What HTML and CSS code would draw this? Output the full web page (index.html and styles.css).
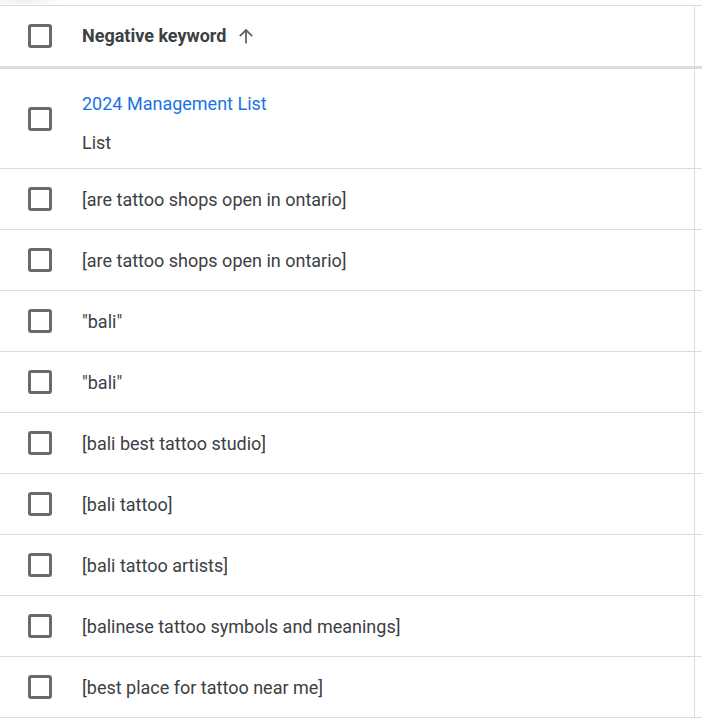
FILE: index.html
```html
<!DOCTYPE html>
<html>
<head>
<meta charset="utf-8">
<link rel="stylesheet" href="styles.css">
</head>
<body>
<div class="top"><div class="shade"></div></div>
<div class="table">
  <div class="row header">
    <div class="cell main">
      <span class="cb"></span>
      <span class="head-label">Negative keyword</span>
      <svg class="sort" width="16" height="16" viewBox="0 0 16 16"><path d="M8 15.5V2M1.8 8.2L8 2l6.2 6.2" fill="none" stroke="#5f6368" stroke-width="1.8"/></svg>
    </div>
    <div class="cell extra"></div>
  </div>
  <div class="row list">
    <div class="cell main">
      <span class="cb"></span>
      <div class="two">
        <span class="link">2024 Management List</span>
        <span class="txt">List</span>
      </div>
    </div>
    <div class="cell extra"></div>
  </div>
  <div class="row"><div class="cell main"><span class="cb"></span><span class="txt">[are tattoo shops open in ontario]</span></div><div class="cell extra"></div></div>
  <div class="row"><div class="cell main"><span class="cb"></span><span class="txt">[are tattoo shops open in ontario]</span></div><div class="cell extra"></div></div>
  <div class="row"><div class="cell main"><span class="cb"></span><span class="txt">"bali"</span></div><div class="cell extra"></div></div>
  <div class="row"><div class="cell main"><span class="cb"></span><span class="txt">"bali"</span></div><div class="cell extra"></div></div>
  <div class="row"><div class="cell main"><span class="cb"></span><span class="txt">[bali best tattoo studio]</span></div><div class="cell extra"></div></div>
  <div class="row"><div class="cell main"><span class="cb"></span><span class="txt">[bali tattoo]</span></div><div class="cell extra"></div></div>
  <div class="row"><div class="cell main"><span class="cb"></span><span class="txt">[bali tattoo artists]</span></div><div class="cell extra"></div></div>
  <div class="row"><div class="cell main"><span class="cb"></span><span class="txt">[balinese tattoo symbols and meanings]</span></div><div class="cell extra"></div></div>
  <div class="row"><div class="cell main"><span class="cb"></span><span class="txt">[best place for tattoo near me]</span></div><div class="cell extra"></div></div>
</div>
</body>
</html>
```
FILE: styles.css
```css
html, body {
  margin: 0;
  padding: 0;
  background: #fff;
  font-family: Roboto, "Liberation Sans", sans-serif;
  color: #3c4043;
  overflow: hidden;
}
.top {
  height: 5px;
  position: relative;
}
.shade {
  width: 60px;
  height: 5px;
  background: radial-gradient(ellipse at 40% 0%, #ececec 0%, #f6f6f6 45%, rgba(255,255,255,0) 75%);
}
.table {
  border-top: 1px solid #dadce0;
}
.row {
  display: flex;
  border-bottom: 1px solid #dadce0;
}
.row.header {
  border-bottom: 3px solid #dadce0;
}
.cell.main {
  width: 695px;
  flex: none;
  border-right: 1px solid #dadce0;
  display: flex;
  align-items: center;
  padding-left: 28px;
  box-sizing: border-box;
  height: 60px;
}
.row.list .cell.main {
  height: auto;
}
.cell.extra {
  flex: 1;
}
.cb {
  width: 24px;
  height: 24px;
  box-sizing: border-box;
  border: 3px solid #6a6a6a;
  border-radius: 3px;
  flex: none;
  margin-right: 30px;
}
.txt {
  font-size: 18px;
  line-height: 24px;
  padding-top: 1px;
  color: #3c4043;
}
.head-label {
  font-size: 18px;
  font-weight: 700;
  line-height: 24px;
  color: #3c4043;
}
.sort {
  margin-left: 12px;
}
.two {
  display: flex;
  flex-direction: column;
  gap: 15px;
  padding: 23px 0 13px;
}
.two .txt {
  padding-top: 0;
}
.link {
  font-size: 18px;
  line-height: 24px;
  color: #1a73e8;
}
```
